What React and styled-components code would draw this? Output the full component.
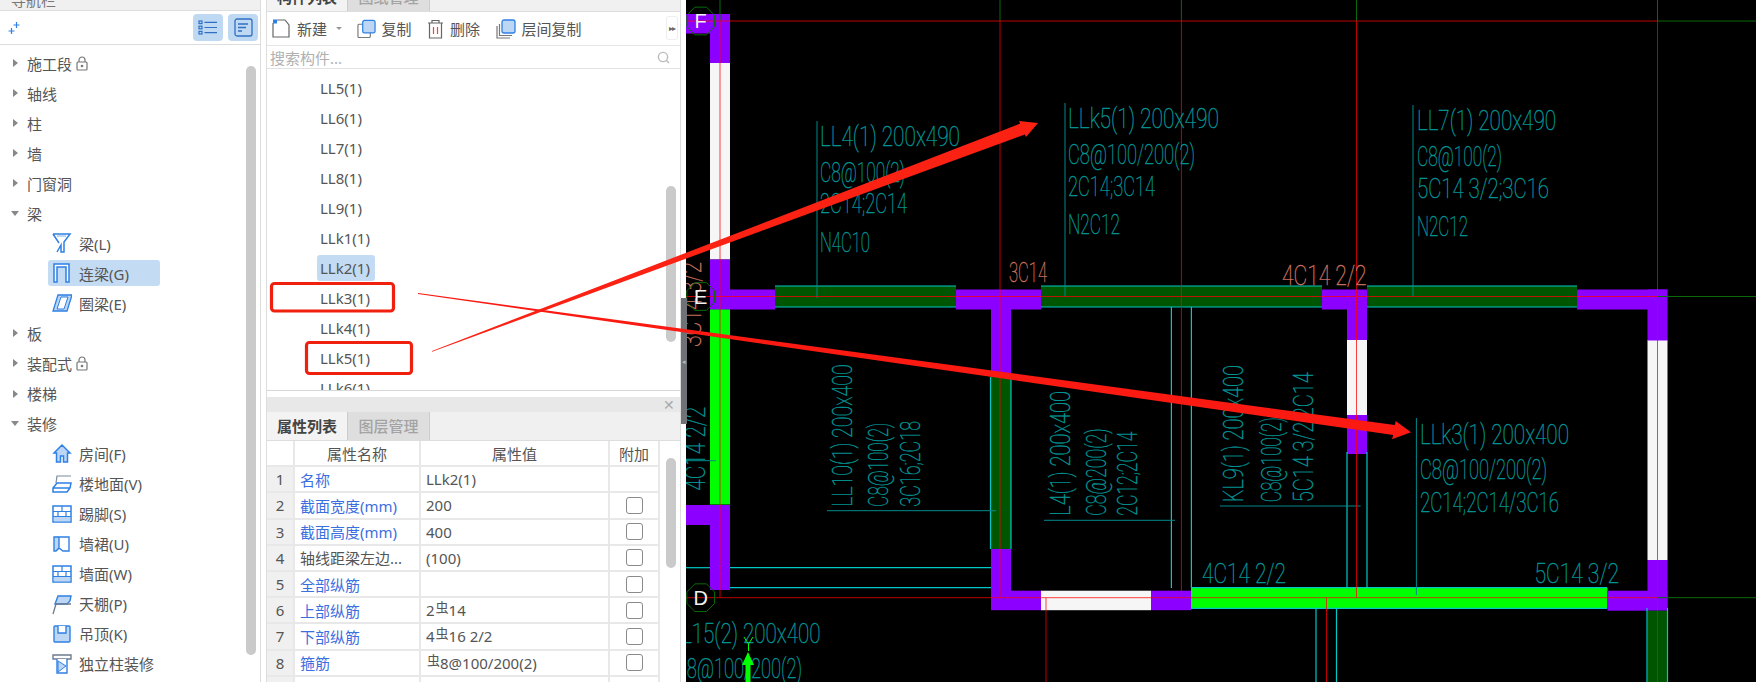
import React from "react";
import styled, { createGlobalStyle } from "styled-components";

const GlobalStyle = createGlobalStyle`
  html, body { margin: 0; padding: 0; background: #fff; }
  body { font-family: "Noto Sans", "Noto Sans CJK SC", sans-serif; overflow: hidden; }
  * { box-sizing: border-box; }
`;

const UI = `"Noto Sans", "Noto Sans CJK SC", sans-serif`;
const BLUE = "#2f80e4";
const TINT = "#bcd6f4";

const Page = styled.div`
  position: relative;
  width: 1756px;
  height: 682px;
  display: flex;
  overflow: hidden;
  font-family: ${UI};
  font-size: 15px;
  color: #555;
`;

/* left tree */
const LeftPanel = styled.aside`
  position: relative;
  width: 261px;
  flex: none;
  display: flex;
  flex-direction: column;
  border-right: 1px solid #ddd;
`;
const NavHead = styled.div`
  height: 11px;
  flex: none;
  background: #f0f0f0;
  border-bottom: 1px solid #ddd;
  overflow: hidden;
  display: flex;
  align-items: flex-end;
  padding-left: 11px;
  color: #777;
  line-height: 20px;
`;
const NavTools = styled.div`
  height: 34px;
  flex: none;
  display: flex;
  align-items: center;
  padding: 0 2px 0 8px;
  gap: 5px;
  border-bottom: 1px solid #ddd;
`;
const ToolToggle = styled.div`
  width: 30px;
  height: 27px;
  border-radius: 4px;
  background: #c0d9f3;
  display: flex;
  align-items: center;
  justify-content: center;
`;
const Spacer = styled.div`
  flex: 1;
`;
const Tree = styled.div`
  padding-top: 3px;
`;
const TreeRow = styled.div`
  height: 30.05px;
  display: flex;
  align-items: center;
  padding-left: ${(p) => (p.$child ? "48px" : "11px")};
`;
const Caret = styled.span`
  width: 8px;
  height: 10px;
  margin-right: 8px;
  flex: none;
  display: flex;
  align-items: center;
  justify-content: ${(p) => (p.$open ? "center" : "flex-start")};
  padding-left: ${(p) => (p.$open ? 0 : "2px")};
  &::before {
    content: "";
    border-style: solid;
    border-color: transparent;
    ${(p) =>
      p.$open
        ? `border-width: 5px 4.5px 0; border-top-color: #888;`
        : `border-width: 4.5px 0 4.5px 5px; border-left-color: #888;`}
  }
`;
const ChildPill = styled.div`
  width: 112px;
  height: 26px;
  display: flex;
  align-items: center;
  gap: 7px;
  padding-left: 4px;
  border-radius: 3px;
  white-space: nowrap;
  background: ${(p) => (p.$selected ? "#c3dbf3" : "transparent")};
`;
const Lock = styled.svg`
  margin-left: 4px;
  flex: none;
`;
const Scrollbar = styled.div`
  position: absolute;
  width: 10px;
  border-radius: 5px;
  background: #cacaca;
  left: ${(p) => p.$left}px;
  top: ${(p) => p.$top}px;
  height: ${(p) => p.$h}px;
`;

/* middle column */
const Mid = styled.section`
  position: relative;
  margin-left: 5px;
  width: 415px;
  flex: none;
  display: flex;
  flex-direction: column;
  border-left: 1px solid #ddd;
  border-right: 1px solid #ddd;
`;
const TabBar = styled.div`
  display: flex;
  height: ${(p) => p.$h}px;
  flex: none;
  align-items: flex-end;
  overflow: hidden;
  background: #f0f0f0;
  border-bottom: 1px solid #ddd;
`;
const Tab = styled.div`
  width: ${(p) => (p.$active ? "81px" : "82px")};
  height: 28px;
  flex: none;
  text-align: center;
  line-height: 28px;
  font-weight: ${(p) => (p.$active ? 700 : 500)};
  color: ${(p) => (p.$active ? "#444" : "#a3a3a3")};
  background: ${(p) => (p.$active ? "#f3f3f3" : "#dedede")};
  border-right: 1px solid #ccc;
`;
const ListTools = styled.div`
  position: relative;
  height: 34px;
  flex: none;
  display: flex;
  align-items: center;
  padding-left: 5px;
  gap: 15.5px;
  border-bottom: 1px solid #e5e5e5;
`;
const ToolItem = styled.div`
  display: flex;
  align-items: center;
  gap: 6px;
  white-space: nowrap;
  color: #555;
`;
const DropCaret = styled.span`
  margin: 0 -1px 0 3px;
  border-style: solid;
  border-width: 3px 3px 0;
  border-color: #999 transparent transparent;
`;
const Handle = styled.div`
  position: absolute;
  right: 2px;
  top: 4px;
  width: 12px;
  height: 24px;
  border: 1px solid #eee;
  border-radius: 3px;
  font-size: 8px;
  line-height: 22px;
  letter-spacing: -1px;
  text-align: center;
  color: #666;
`;
const SearchBar = styled.div`
  height: 23px;
  flex: none;
  display: flex;
  align-items: center;
  justify-content: space-between;
  padding: 0 10px 0 3px;
  color: #b0b0b0;
  border-bottom: 1px solid #e2e2e2;
`;
const CompList = styled.div`
  height: 322px;
  flex: none;
  overflow: hidden;
  padding: 4px 0 0 50px;
  border-bottom: 1px solid #d8d8d8;
`;
const CompRow = styled.div`
  height: 30px;
  display: flex;
  align-items: center;
`;
const CompName = styled.span`
  display: block;
  height: 26px;
  line-height: 26px;
  padding: 0 5px 0 3px;
  border-radius: 3px;
  background: ${(p) => (p.$selected ? "#c3dbf3" : "transparent")};
`;
const Gap = styled.div`
  height: 6px;
  flex: none;
`;
const CloseBar = styled.div`
  height: 15px;
  flex: none;
  background: #e8e8e8;
  display: flex;
  justify-content: flex-end;
  align-items: center;
  padding-right: 5px;
  color: #aaa;
  font-size: 14px;
`;
const Table = styled.div`
  flex: 1;
  overflow: hidden;
  width: 393px;
`;
const TableRow = styled.div`
  display: grid;
  grid-template-columns: 28px 126px 189px 50px;
  height: 26.2px;
  border-bottom: 2px solid #e8e8e8;
`;
const Cell = styled.div`
  display: flex;
  align-items: center;
  justify-content: ${(p) => (p.$center ? "center" : "flex-start")};
  padding-left: ${(p) => (p.$center ? 0 : "5px")};
  border-right: 2px solid #e8e8e8;
  white-space: nowrap;
  color: ${(p) => (p.$link ? "#3b6fe0" : "#555")};
  background: ${(p) => (p.$num ? "#f0f0f0" : "#fff")};
`;
const Rebar = styled.span`
  font-size: 13px;
  line-height: 1;
  margin: -5px 0 0 1px;
`;
const CheckBox = styled.span`
  width: 17px;
  height: 17px;
  border: 1px solid #8a8a8a;
  border-radius: 3px;
  background: #fff;
`;
const Splitter = styled.div`
  width: 5px;
  flex: none;
  position: relative;
`;
const SplitGrip = styled.div`
  position: absolute;
  top: 298px;
  left: 0;
  width: 6px;
  height: 126px;
  background: #6f7378;
  color: #bbb;
  font-size: 7px;
  display: flex;
  align-items: center;
  justify-content: center;
`;

/* cad canvas */
const Cad = styled.svg`
  width: 1070px;
  height: 682px;
  flex: none;
  display: block;
  background: #000;
`;
const CadText = styled.text`
  font-family: Roboto, "Liberation Sans", sans-serif;
  font-size: 28px;
  font-weight: 100;
  fill: ${(p) => p.$fill || "#009595"};
  stroke: ${(p) => p.$fill || "#009595"};
  stroke-width: 0.45px;
`;
const AxisText = styled.text`
  font-family: "Liberation Sans", sans-serif;
  font-size: 20px;
  fill: #f2f2f2;
  text-anchor: middle;
`;
const Overlay = styled.svg`
  position: absolute;
  left: 0;
  top: 0;
  pointer-events: none;
`;

const TREE = [
  { label: "施工段", lock: true },
  { label: "轴线" },
  { label: "柱" },
  { label: "墙" },
  { label: "门窗洞" },
  { label: "梁", open: true },
  { label: "梁(L)", icon: "beam" },
  { label: "连梁(G)", icon: "link", selected: true },
  { label: "圈梁(E)", icon: "ring" },
  { label: "板" },
  { label: "装配式", lock: true },
  { label: "楼梯" },
  { label: "装修", open: true },
  { label: "房间(F)", icon: "house" },
  { label: "楼地面(V)", icon: "floor" },
  { label: "踢脚(S)", icon: "brick" },
  { label: "墙裙(U)", icon: "book" },
  { label: "墙面(W)", icon: "brick" },
  { label: "天棚(P)", icon: "ceil" },
  { label: "吊顶(K)", icon: "hang" },
  { label: "独立柱装修", icon: "column" },
];

const COMPS = ["LL5(1)", "LL6(1)", "LL7(1)", "LL8(1)", "LL9(1)", "LLk1(1)", "LLk2(1)", "LLk3(1)", "LLk4(1)", "LLk5(1)", "LLk6(1)"];

const PROPS = [
  { name: "名称", value: "LLk2(1)", link: true, nobox: true },
  { name: "截面宽度(mm)", value: "200", link: true },
  { name: "截面高度(mm)", value: "400", link: true },
  { name: "轴线距梁左边...", value: "(100)" },
  { name: "全部纵筋", value: "", link: true },
  { name: "上部纵筋", value: ["2", "14"], link: true },
  { name: "下部纵筋", value: ["4", "16 2/2"], link: true },
  { name: "箍筋", value: ["", "8@100/200(2)"], link: true },
];

const TreeIcon = ({ kind }) => {
  const line = { fill: "none", stroke: BLUE, strokeWidth: 1.5 };
  return (
    <svg width="20" height="22" viewBox="0 0 20 22" style={{ flex: "none" }}>
      {kind === "beam" && (
        <>
          <path d="M1 2H18L12 10V20H9V13L5 20M1 2L7 11" {...line} />
          <path d="M5 4H14" stroke={TINT} strokeWidth="2" />
        </>
      )}
      {kind === "link" && <path d="M2 20V2H17V20H14V5H5V20Z" fill="#fff" stroke={BLUE} strokeWidth="1.5" />}
      {kind === "ring" && (
        <>
          <path d="M6 3H20L15 19H1Z" fill={TINT} stroke={BLUE} strokeWidth="1.3" />
          <path d="M9 5H16L12 17H5Z" fill="#fff" stroke={BLUE} strokeWidth="1" />
        </>
      )}
      {kind === "house" && <path d="M10 2L2 10H4.5V19H8.5V13H11.5V19H15.5V10H18Z" fill={TINT} stroke={BLUE} strokeWidth="1.5" />}
      {kind === "floor" && (
        <>
          <path d="M4 10L5 3H19" fill="none" stroke="#7d8a99" strokeWidth="1.2" />
          <path d="M1 19V15L5 10H19L18 15L15 19ZM1 15H18" fill="#fff" stroke={BLUE} strokeWidth="1.5" />
        </>
      )}
      {kind === "brick" && (
        <>
          <rect x="1" y="3" width="18" height="16" fill="#fff" stroke={BLUE} strokeWidth="1.5" />
          <rect x="1.8" y="13.5" width="16.4" height="4.8" fill={TINT} />
          <path d="M1 8.5H19M1 13.5H19M10 3V8.5M6 8.5V13.5M14 8.5V13.5" stroke={BLUE} strokeWidth="1.2" />
        </>
      )}
      {kind === "book" && (
        <>
          <path d="M2 4L7 3V17L2 18Z" fill={TINT} />
          <path d="M2 4H17V18H11L7 15L4 18H2ZM7 4V15" fill="none" stroke={BLUE} strokeWidth="1.4" />
        </>
      )}
      {kind === "ceil" && (
        <>
          <path d="M3 11L6 3H19L18 8L15 11Z" fill={TINT} stroke={BLUE} strokeWidth="1.4" />
          <path d="M1 21L4 11H19" fill="none" stroke="#6f7c8c" strokeWidth="1.3" />
        </>
      )}
      {kind === "hang" && (
        <>
          <rect x="2" y="3" width="16" height="16" rx="1" fill={TINT} stroke={BLUE} strokeWidth="1.4" />
          <path d="M6 3V10H14V3" fill="#fff" stroke={BLUE} strokeWidth="1.4" />
        </>
      )}
      {kind === "column" && (
        <>
          <path d="M1 2H19V6H1Z" fill="#fff" stroke="#6f7c8c" strokeWidth="1.4" />
          <path d="M5 6V20H15V6" fill="#fff" stroke={BLUE} strokeWidth="1.4" />
          <path d="M6 8L14 13L6 19Z" fill={TINT} stroke={BLUE} strokeWidth="1" />
        </>
      )}
    </svg>
  );
};

const LockIcon = () => (
  <Lock width="12" height="15" viewBox="0 0 12 15">
    <path d="M3 6V4a3 3 0 0 1 6 0V6" fill="none" stroke="#777" strokeWidth="1.2" />
    <rect x="1" y="6" width="10" height="8" rx="1" fill="#fff" stroke="#777" strokeWidth="1.2" />
    <circle cx="6" cy="10" r="1.3" fill="#777" />
  </Lock>
);

const NavPanel = () => (
  <LeftPanel>
    <NavHead>导航栏</NavHead>
    <NavTools>
      <svg width="13" height="14" viewBox="0 0 13 14">
        <path d="M8.5 1V7M5.5 4H11.5M3.5 7V13M0.5 10H6.5" stroke={BLUE} strokeWidth="1.2" />
      </svg>
      <Spacer />
      <ToolToggle>
        <svg width="20" height="15" viewBox="0 0 20 15" fill="none" stroke="#2f6fc4" strokeWidth="1.2">
          <rect x="1" y="1" width="3" height="2.6" />
          <rect x="1" y="6.2" width="3" height="2.6" />
          <rect x="1" y="11.4" width="3" height="2.6" />
          <path d="M6.5 2.3H19M6.5 7.5H19M6.5 12.7H19" />
        </svg>
      </ToolToggle>
      <ToolToggle>
        <svg width="19" height="19" viewBox="0 0 19 19" fill="none" stroke="#2f6fc4" strokeWidth="1.3">
          <rect x="1" y="1" width="17" height="17" rx="2" />
          <path d="M4 6H14M4 9.5H12M4 13H8" />
        </svg>
      </ToolToggle>
    </NavTools>
    <Tree>
      {TREE.map((item) =>
        item.icon ? (
          <TreeRow $child key={item.label}>
            <ChildPill $selected={item.selected}>
              <TreeIcon kind={item.icon} />
              {item.label}
            </ChildPill>
          </TreeRow>
        ) : (
          <TreeRow key={item.label}>
            <Caret $open={item.open} />
            {item.label}
            {item.lock && <LockIcon />}
          </TreeRow>
        )
      )}
    </Tree>
    <Scrollbar $left={246} $top={66} $h={589} />
  </LeftPanel>
);

const ListToolbar = () => (
  <ListTools>
    <ToolItem>
      <svg width="19" height="19" viewBox="0 0 19 19" fill="none" stroke="#666" strokeWidth="1.2">
        <path d="M1 4V18H17V6L13 1H5" />
        <path d="M1 0.5H5V4.5H1Z" fill={BLUE} stroke="none" />
      </svg>
      新建
      <DropCaret />
    </ToolItem>
    <ToolItem>
      <svg width="19" height="20" viewBox="0 0 20 20">
        <rect x="1" y="5" width="13" height="14" rx="1" fill="#fff" stroke="#777" strokeWidth="1.2" />
        <rect x="6" y="1" width="13" height="13" rx="2" fill={TINT} stroke={BLUE} strokeWidth="1.3" />
      </svg>
      复制
    </ToolItem>
    <ToolItem>
      <svg width="17" height="20" viewBox="0 0 17 20" fill="none" stroke="#666" strokeWidth="1.2">
        <path d="M1 4H16M5 4V1.5H12V4M2.5 4V19H14.5V4" />
        <path d="M6.5 8V15M10.5 8V15" stroke="#e44" />
      </svg>
      删除
    </ToolItem>
    <ToolItem>
      <svg width="20" height="20" viewBox="0 0 20 20">
        <path d="M1 7V19H14M3.5 5V16.5H16" fill="none" stroke="#777" strokeWidth="1.2" />
        <rect x="6" y="1" width="13" height="13" rx="2" fill={TINT} stroke={BLUE} strokeWidth="1.3" />
      </svg>
      层间复制
    </ToolItem>
    <Handle>▸▸</Handle>
  </ListTools>
);

const PropValue = ({ value }) =>
  Array.isArray(value) ? (
    <>
      {value[0]}
      <Rebar>虫</Rebar>
      {value[1]}
    </>
  ) : (
    value
  );

const MiddleColumn = () => (
  <Mid>
    <TabBar $h={12}>
      <Tab $active>构件列表</Tab>
      <Tab>图纸管理</Tab>
    </TabBar>
    <ListToolbar />
    <SearchBar>
      搜索构件...
      <svg width="13" height="13" viewBox="0 0 13 13" fill="none" stroke="#bbb" strokeWidth="1.4">
        <circle cx="6" cy="6" r="4.6" />
        <path d="M9.5 9.5L12 12" />
      </svg>
    </SearchBar>
    <CompList>
      {COMPS.map((name) => (
        <CompRow key={name}>
          <CompName $selected={name === "LLk2(1)"}>{name}</CompName>
        </CompRow>
      ))}
    </CompList>
    <Gap />
    <CloseBar>✕</CloseBar>
    <TabBar $h={29}>
      <Tab $active>属性列表</Tab>
      <Tab>图层管理</Tab>
    </TabBar>
    <Table>
      <TableRow>
        <Cell />
        <Cell $center>属性名称</Cell>
        <Cell $center>属性值</Cell>
        <Cell $center>附加</Cell>
      </TableRow>
      {PROPS.map((row, i) => (
        <TableRow key={row.name}>
          <Cell $num $center>{i + 1}</Cell>
          <Cell $link={row.link}>{row.name}</Cell>
          <Cell><PropValue value={row.value} /></Cell>
          <Cell $center>{!row.nobox && <CheckBox />}</Cell>
        </TableRow>
      ))}
      <TableRow>
        <Cell $num />
        <Cell />
        <Cell />
        <Cell />
      </TableRow>
    </Table>
    <Scrollbar $left={399} $top={458} $h={110} />
    <Scrollbar $left={399} $top={186} $h={156} />
  </Mid>
);

const PURPLE = "#8b00ff";
const BRIGHT = "#00ff00";
const DARK = "#005500";
const WHITE = "#f6f6f6";
const SALMON = "#c9705f";

// [x, y, w, h, fill] in page coordinates
const BLOCKS = [
  [686, 14, 44, 19.5, PURPLE],
  [710, 14, 20, 49, PURPLE],
  [710, 63, 20, 196.5, WHITE],
  [710, 259.5, 20, 50, PURPLE],
  [710, 289.5, 65, 20, PURPLE],
  [775, 286, 181, 21, DARK],
  [956, 289.5, 85, 20, PURPLE],
  [991, 309, 20, 68, PURPLE],
  [991, 377, 20, 172, DARK],
  [991, 549, 20, 61, PURPLE],
  [991, 590.7, 50, 19.5, PURPLE],
  [1041, 590.7, 110, 19.5, WHITE],
  [1151, 590.7, 40, 19.5, PURPLE],
  [1191, 587.7, 416.5, 20.6, BRIGHT],
  [1607.5, 590.7, 60, 20, PURPLE],
  [1647.5, 560, 20, 50, PURPLE],
  [1647.5, 340, 20, 220, WHITE],
  [1647.5, 289.5, 20, 51, PURPLE],
  [1577, 289.5, 90, 20, PURPLE],
  [1367, 286, 210, 21, DARK],
  [1041, 286, 281, 21, DARK],
  [1322, 289.5, 45, 20, PURPLE],
  [1347, 309, 20, 31, PURPLE],
  [1347, 340, 20, 75, WHITE],
  [1347, 415, 20, 39, PURPLE],
  [710, 309.5, 20, 195, BRIGHT],
  [710, 505, 20, 85, PURPLE],
  [686, 505, 44, 20, PURPLE],
  [1647.5, 610.7, 20, 72, DARK],
];

// [x1, y1, x2, y2]
const CYAN = [
  [775, 286, 956, 286], [775, 307, 956, 307],
  [1041, 286, 1322, 286], [1041, 307, 1322, 307],
  [1367, 286, 1577, 286], [1367, 307, 1577, 307],
  [990.5, 377, 990.5, 549], [1011, 377, 1011, 549],
  [686, 567.7, 710, 567.7], [730, 567.7, 991, 567.7], [730, 587.7, 991, 587.7],
  [1171.4, 307, 1171.4, 588], [1191.4, 307, 1191.4, 588],
  [1347, 452, 1347, 588], [1367, 452, 1367, 588],
  [1191, 587.7, 1607, 587.7], [1191, 608.3, 1607, 608.3],
  [1316, 608, 1316, 682], [1336.5, 608, 1336.5, 682],
  [1647, 608, 1647, 682], [1667.5, 608, 1667.5, 682],
];

const LEADERS = [
  [817, 121, 817, 298], [1065, 103, 1065, 297], [1413, 105, 1413, 297], [1416.4, 418, 1416.4, 595],
  [827, 510.7, 996, 510.7], [1044, 520.3, 1175, 520.3], [1220, 506, 1360.6, 506], [686, 460.7, 716, 460.7],
];

const GREENS = [
  [720, 0, 720, 21], [1000, 0, 1000, 21], [1181.4, 0, 1181.4, 21], [1356.5, 0, 1356.5, 21], [1657.5, 0, 1657.5, 21],
  [1657.5, 21, 1756, 21], [1657.5, 296.5, 1756, 296.5], [1657.5, 597.7, 1756, 597.7],
];

const REDS = [
  [686, 21, 1657.5, 21], [686, 296.5, 1657.5, 296.5], [686, 597.7, 1657.5, 597.7],
  [720, 21, 720, 597.7], [1000, 21, 1000, 597.7], [1181.4, 21, 1181.4, 597.7], [1356.5, 21, 1356.5, 597.7],
  [1657.5, 21, 1657.5, 682], [1046, 597.7, 1046, 682], [1326.5, 597.7, 1326.5, 682],
];

// text, x, baseline y, length, optional colour
const LABELS = [
  ["LL4(1) 200x490", 820, 146, 140], ["C8@100(2)", 820, 182, 85], ["2C14;2C14", 820, 213, 87], ["N4C10", 820, 252, 50],
  ["LLk5(1) 200x490", 1068, 128, 151], ["C8@100/200(2)", 1068, 164, 127], ["2C14;3C14", 1068, 195.7, 87], ["N2C12", 1068, 234, 52],
  ["LL7(1) 200x490", 1417, 130, 139], ["C8@100(2)", 1417, 165.7, 85], ["5C14 3/2;3C16", 1417, 198.3, 132], ["N2C12", 1417, 236, 51],
  ["LLk3(1) 200x400", 1420, 444, 149], ["C8@100/200(2)", 1420, 479, 127], ["2C14;2C14/3C16", 1420, 511.7, 139],
  ["4C14 2/2", 1202, 582.7, 84], ["5C14 3/2", 1534.5, 582.7, 84.5],
  ["LL15(2) 200x400", 670.5, 643.3, 150], ["C8@100/200(2)", 675, 678.3, 127],
  ["3C14", 1009, 282, 38, SALMON], ["4C14 2/2", 1282, 285, 84.5, SALMON],
];

// text, baseline x, start y, length, optional colour
const VLABELS = [
  ["LL10(1) 200x400", 852, 506.7, 142.4], ["C8@100(2)", 888, 506.7, 84], ["3C16;2C18", 920, 506.7, 85.7],
  ["L4(1) 200x400", 1070, 515.7, 124.7], ["C8@200(2)", 1105.6, 515.7, 87.4], ["2C12;2C14", 1137, 515.7, 84],
  ["KL9(1) 200x400", 1243.5, 502.3, 137.3], ["C8@100(2)", 1280.7, 502.3, 85], ["5C14 3/2;2C14", 1313, 502.3, 130],
  ["4C14 2/2", 705, 490.7, 84],
  ["3C14 3/2", 701, 347, 85, SALMON],
];

const AXES = [["F", 21], ["E", 296.5], ["D", 597.7]];

const octagon = (cx, cy, r) =>
  Array.from({ length: 8 }, (_, i) => {
    const a = (i * Math.PI) / 4 + Math.PI / 8;
    return `${cx + r * Math.cos(a)},${cy + r * Math.sin(a)}`;
  }).join(" ");

const Segments = ({ items, color, width = 1, opacity = 1 }) => (
  <g stroke={color} strokeWidth={width} opacity={opacity}>
    {items.map(([x1, y1, x2, y2]) => (
      <line key={`${x1}-${y1}-${x2}-${y2}`} x1={x1} y1={y1} x2={x2} y2={y2} />
    ))}
  </g>
);

const CadView = () => (
  <Cad viewBox="686 0 1070 682">
    {BLOCKS.map(([x, y, w, h, fill]) => (
      <rect key={`${x}-${y}-${h}`} x={x} y={y} width={w} height={h} fill={fill} />
    ))}
    <Segments items={GREENS} color="#0a6a0a" />
    <Segments items={CYAN} color="#00c8c8" width={1.2} />
    <Segments items={LEADERS} color="#008a8a" />
    <Segments items={REDS} color="#ff0000" opacity={0.75} />
    {LABELS.map(([text, x, y, len, fill]) => (
      <CadText key={`${text}-${x}`} x={x} y={y} textLength={len} lengthAdjust="spacingAndGlyphs" $fill={fill}>
        {text}
      </CadText>
    ))}
    {VLABELS.map(([text, x, y, len, fill]) => (
      <CadText key={`${text}-${x}`} x={x} y={y} transform={`rotate(-90 ${x} ${y})`} textLength={len} lengthAdjust="spacingAndGlyphs" $fill={fill}>
        {text}
      </CadText>
    ))}
    {AXES.map(([name, y]) => (
      <g key={name}>
        <polygon points={octagon(700.7, y, 15)} fill="none" stroke="#0a6a0a" strokeWidth="1" />
        <AxisText x={700.7} y={y + 7}>{name}</AxisText>
      </g>
    ))}
    <path d="M744 637L748.5 644L753 637M748.5 644V651" fill="none" stroke="#00ff00" strokeWidth="1" />
    <path d="M748 652L754 665H750.5V682H745.5V665H742Z" fill="#00ff00" />
  </Cad>
);

const Annotations = () => (
  <Overlay width="1756" height="682" viewBox="0 0 1756 682">
    <rect x="271.5" y="283.5" width="122" height="27.5" rx="3" fill="none" stroke="#f0200f" strokeWidth="3.2" />
    <rect x="306.5" y="342.5" width="105" height="31" rx="3" fill="none" stroke="#f0200f" strokeWidth="3.2" />
    <polygon points="432,351 1020.2,123.6 1019,121 1038,123 1026,137 1024.8,134.4 432,351.8" fill="#fb2214" />
    <polygon points="418,293 1394.8,425 1395.7,421 1411,432.3 1392,439.3 1393.2,435 418,294" fill="#fb1a12" />
  </Overlay>
);

export default function App() {
  return (
    <Page>
      <GlobalStyle />
      <NavPanel />
      <MiddleColumn />
      <Splitter>
        <SplitGrip>◂</SplitGrip>
      </Splitter>
      <CadView />
      <Annotations />
    </Page>
  );
}
